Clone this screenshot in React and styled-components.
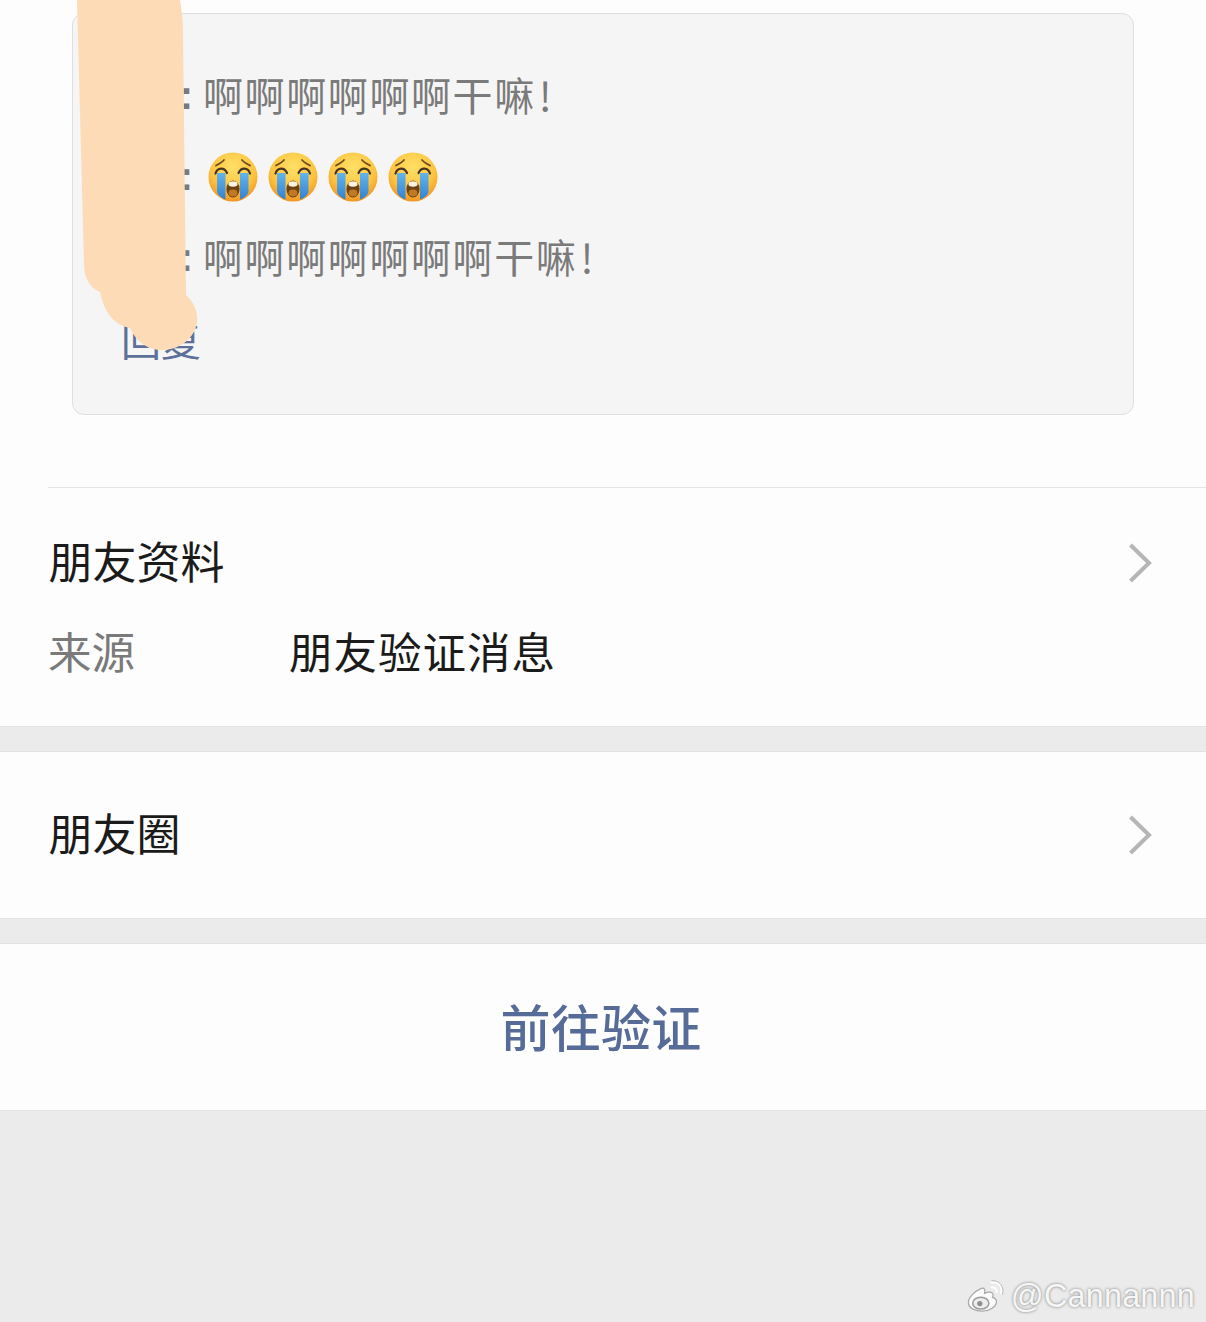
import React from "react";
import styled, { createGlobalStyle } from "styled-components";

const Global = createGlobalStyle`
  html, body { margin: 0; padding: 0; background: #ebebeb; }
  * { box-sizing: border-box; }
`;

const CJK = `"Noto Sans CJK SC", "Noto Sans", sans-serif`;

const Page = styled.div`
  position: relative;
  width: 1206px;
  height: 1322px;
  overflow: hidden;
  background: #ebebeb;
  font-family: ${CJK};
`;

const Profile = styled.section`
  background: #fdfdfd;
  height: 727px;
  padding-top: 13px;
  border-bottom: 1px solid #e3e3e3;
`;

const NoteBox = styled.div`
  width: 1062px;
  height: 402px;
  margin-left: 72px;
  padding: 42px 0 0 49px;
  background: #f5f5f5;
  border: 1.5px solid #dfdfdf;
  border-radius: 12px;
`;

const NoteLine = styled.div`
  display: flex;
  align-items: center;
  height: 81px;
  color: #7a7a7a;
  font-size: 40px;
  font-weight: 400;
  letter-spacing: 1.6px;
`;

const Speaker = styled.span`
  width: 71px;
  flex: none;
  text-align: right;
  font-family: "Liberation Sans", sans-serif;
  font-size: 40px;
  font-weight: 700;
  letter-spacing: 0;
  margin-bottom: 2px;
`;

const Message = styled.span`
  margin-left: 10px;
  margin-bottom: 6px;
  display: flex;
  align-items: center;
`;

const Bang = styled.span`
  margin-left: 3px;
`;

const FaceRow = styled.span`
  margin-left: 15px;
  margin-bottom: 2px;
  display: flex;
  align-items: center;
  gap: 10px;
`;

const Reply = styled.div`
  height: 81px;
  line-height: 81px;
  color: #5d7099;
  font-size: 40px;
  font-weight: 400;
  margin-left: -1px;
`;

const Divider = styled.hr`
  border: 0;
  height: 1px;
  margin: 72px 0 0 48px;
  background: #e5e5e5;
`;

const TitleRow = styled.div`
  display: flex;
  align-items: center;
  justify-content: space-between;
  height: ${(p) => p.$height}px;
  margin-top: ${(p) => p.$top || 0}px;
  padding: 0 54px 0 48.5px;
  color: #1b1b1b;
  font-size: 44px;
  font-weight: 400;
`;

const TitleText = styled.span`
  margin-bottom: 6px;
`;

const InfoRow = styled.div`
  display: flex;
  align-items: center;
  height: 90px;
  padding: 0 0 6px 48px;
  font-size: 43.5px;
`;

const InfoLabel = styled.span`
  width: 241px;
  color: #7a7a7a;
  font-weight: 400;
`;

const InfoValue = styled.span`
  color: #1b1b1b;
  letter-spacing: 1px;
`;

const Panel = styled.section`
  height: 168px;
  margin-top: 24px;
  background: #fdfdfd;
  border-top: 1px solid #e3e3e3;
  border-bottom: 1px solid #e3e3e3;
`;

const ActionButton = styled.button`
  display: block;
  width: 100%;
  height: 100%;
  padding: 0 4px 4px 0;
  border: 0;
  background: none;
  color: #566b98;
  font-family: ${CJK};
  font-size: 50px;
  font-weight: 500;
  letter-spacing: 0.3px;
`;

const Cover = styled.svg`
  position: absolute;
  left: 0;
  top: 0;
  pointer-events: none;
`;

const Watermark = styled.div`
  position: absolute;
  right: 11px;
  top: 1274px;
  display: flex;
  align-items: center;
  gap: 6px;
  color: #f6f6f6;
  font-family: "Liberation Sans", sans-serif;
  font-size: 32.4px;
  letter-spacing: 0.2px;
  line-height: 44px;
  text-shadow: 0 0 3px rgba(0, 0, 0, 0.5);
`;

function Chevron() {
  return (
    <svg width="24" height="40" viewBox="0 0 24 40" fill="none">
      <path d="M2.5 2 L21 20 L2.5 38" stroke="#b5b5b5" strokeWidth="4" />
    </svg>
  );
}

function CryingFace({ id }) {
  return (
    <svg width="50" height="50" viewBox="0 0 50 50">
      <defs>
        <radialGradient id={`face-${id}`} cx="50%" cy="30%" r="75%">
          <stop offset="0%" stopColor="#ffe066" />
          <stop offset="60%" stopColor="#fdc440" />
          <stop offset="100%" stopColor="#ee8d1d" />
        </radialGradient>
        <linearGradient id={`tear-${id}`} x1="0" y1="0" x2="0" y2="1">
          <stop offset="0%" stopColor="#63b4ea" />
          <stop offset="100%" stopColor="#3382d2" />
        </linearGradient>
      </defs>
      <circle cx="25" cy="25" r="24.5" fill={`url(#face-${id})`} />
      <path d="M9 21 H17.5 V47.5 C13.5 46 10 43.5 9 40 Z" fill={`url(#tear-${id})`} />
      <path d="M32 21 H40.5 V40 C39.5 43.5 36 46 32 47.5 Z" fill={`url(#tear-${id})`} />
      <path d="M7.5 21.5 C9.5 15 16.5 15 19 21" fill="none" stroke="#4a3320" strokeWidth="2.2" strokeLinecap="round" />
      <path d="M30.5 21 C33 15 40 15 42 21.5" fill="none" stroke="#4a3320" strokeWidth="2.2" strokeLinecap="round" />
      <path d="M8 13.5 C11 12 14 10.5 16 8" fill="none" stroke="#6b4a22" strokeWidth="1.7" strokeLinecap="round" />
      <path d="M42 13.5 C39 12 36 10.5 34 8" fill="none" stroke="#6b4a22" strokeWidth="1.7" strokeLinecap="round" />
      <ellipse cx="25" cy="37" rx="6.6" ry="8.6" fill="#6e4213" />
      <ellipse cx="25" cy="32" rx="4.6" ry="2.8" fill="#fbf3e0" />
      <ellipse cx="25" cy="41" rx="4.4" ry="3.4" fill="#c27a22" />
    </svg>
  );
}

function WeiboMark() {
  return (
    <svg width="38" height="34" viewBox="0 0 40 34" fill="none">
      <path
        d="M15 9 C8 12 1 19 1.5 24.5 C2 30 9 33 16 33 C24 33 31 28 31 23 C31 20 28.5 19 27 18.5 C28 16 27.5 13.5 24.5 13 C22.5 12.8 20 13.5 18.5 14.2 C19.5 11 18.5 7.8 15 9 Z"
        fill="#fbfbfb"
        stroke="#a8a8a8"
        strokeWidth="1.3"
      />
      <ellipse cx="14.5" cy="24.5" rx="8.5" ry="6.2" fill="#ededed" stroke="#9c9c9c" strokeWidth="1.6" />
      <circle cx="13.5" cy="25" r="2.8" fill="#8f8f8f" />
      <path d="M26 2.5 C33 1.5 38 7 36 14" stroke="#fff" strokeWidth="2.4" strokeLinecap="round" />
      <path d="M26 8 C29.5 7.5 31.5 10 31 13" stroke="#fff" strokeWidth="2.2" strokeLinecap="round" />
      <path d="M26 1 C34 0 39.5 7 37.5 15" stroke="#a0a0a0" strokeWidth="0.8" strokeLinecap="round" />
    </svg>
  );
}

export default function App() {
  return (
    <Page>
      <Global />
      <Profile>
        <NoteBox>
          <NoteLine>
            <Speaker>:</Speaker>
            <Message>
              啊啊啊啊啊啊干嘛<Bang>!</Bang>
            </Message>
          </NoteLine>
          <NoteLine>
            <Speaker>:</Speaker>
            <FaceRow>
              {[0, 1, 2, 3].map((n) => (
                <CryingFace key={n} id={n} />
              ))}
            </FaceRow>
          </NoteLine>
          <NoteLine>
            <Speaker>:</Speaker>
            <Message>
              啊啊啊啊啊啊啊干嘛<Bang>!</Bang>
            </Message>
          </NoteLine>
          <Reply>回复</Reply>
        </NoteBox>
        <Divider />
        <TitleRow $height={90} $top={30}>
          <TitleText>朋友资料</TitleText>
          <Chevron />
        </TitleRow>
        <InfoRow>
          <InfoLabel>来源</InfoLabel>
          <InfoValue>朋友验证消息</InfoValue>
        </InfoRow>
      </Profile>
      <Panel>
        <TitleRow $height={166}>
          <TitleText>朋友圈</TitleText>
          <Chevron />
        </TitleRow>
      </Panel>
      <Panel>
        <ActionButton>前往验证</ActionButton>
      </Panel>

      {/* Painted-over strip hiding the sender names */}
      <Cover width="1206" height="400" viewBox="0 0 1206 400">
        <path
          d="M77 0 L180 0 C182 12 183 22 183 34 L186 295 C194 302 198 312 197 322 C195 338 180 350 162 350 C148 350 136 342 130 328 C114 325 104 312 100 292 C90 288 84 278 84 264 Z"
          fill="#fddbb6"
        />
      </Cover>

      <Watermark>
        <WeiboMark />
        @Cannannn
      </Watermark>
    </Page>
  );
}
